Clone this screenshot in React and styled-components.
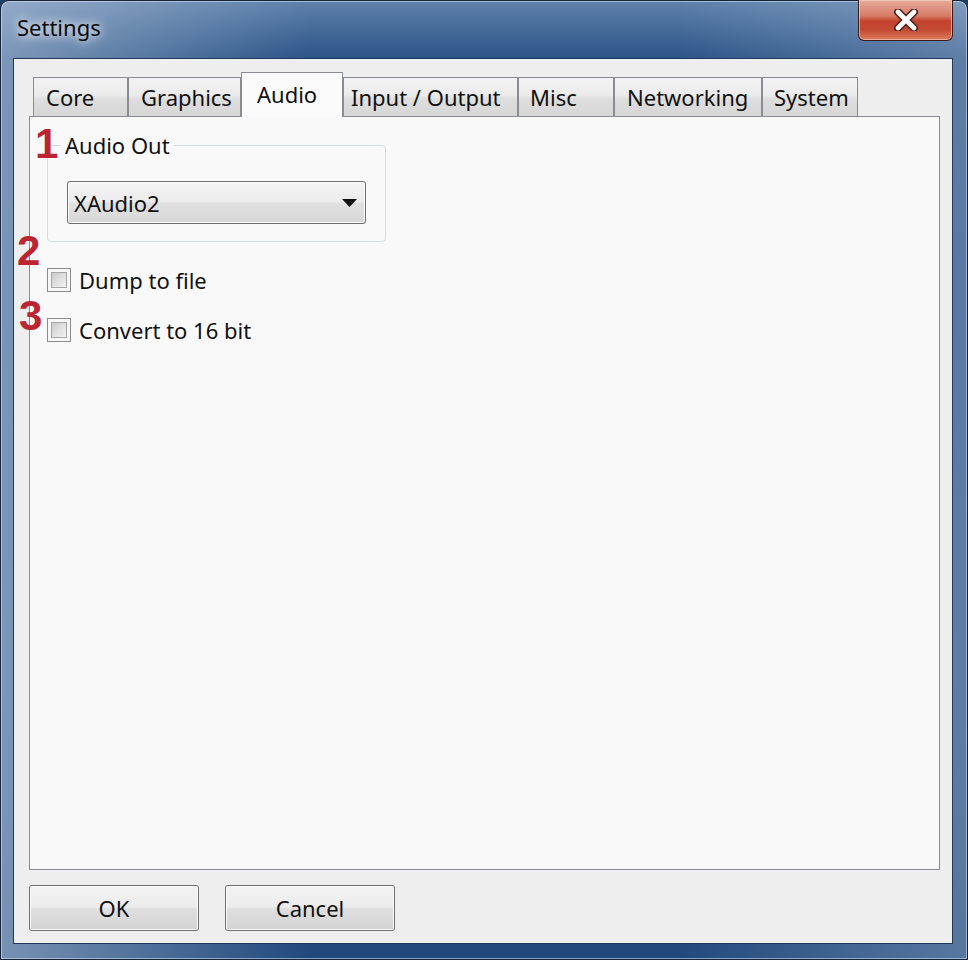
import React from 'react'
import styled, { createGlobalStyle } from 'styled-components'

const GlobalStyle = createGlobalStyle`
  html, body {
    margin: 0;
    padding: 0;
    background: #1f3f66;
  }

  body {
    font-family: 'Noto Sans', 'Open Sans', sans-serif;
    font-size: 22px;
    color: #111;
  }
`

const Window = styled.div`
  box-sizing: border-box;
  width: 968px;
  height: 960px;
  display: flex;
  flex-direction: column;
  padding: 0 14px 15px 12px;
  border: 1px solid #17253a;
  border-radius: 9px 9px 0 0;
  background:
    linear-gradient(90deg, rgba(190, 205, 225, 0.55) 0%, rgba(190, 205, 225, 0) 32%, rgba(190, 205, 225, 0) 70%, rgba(190, 205, 225, 0.35) 100%),
    linear-gradient(180deg, #5f81ab 0%, #2b5487 6%, #234e83 30%, #2a5689 70%, #21497c 100%);
  box-shadow: inset 0 0 0 1px rgba(220, 230, 245, 0.55);
`

const TitleBar = styled.div`
  height: 57px;
  display: flex;
  justify-content: space-between;
  align-items: flex-start;
`

const Title = styled.div`
  padding: 11px 0 0 4px;
  line-height: 30px;
  color: #0c0c0c;
  text-shadow: 0 0 8px rgba(255, 255, 255, 0.9), 0 0 14px rgba(255, 255, 255, 0.7);
`

const CloseButton = styled.div`
  box-sizing: border-box;
  width: 95px;
  height: 41px;
  margin-top: -1px;
  display: flex;
  align-items: center;
  justify-content: center;
  border: 1px solid #3a1d1a;
  border-top: none;
  border-radius: 0 0 6px 6px;
  background: linear-gradient(180deg, #e6ab9c 0%, #d77b66 40%, #c2432e 52%, #c44a33 75%, #dc7c5f 100%);
  box-shadow: inset 0 0 0 1px rgba(255, 220, 210, 0.55);
`

const Client = styled.div`
  flex: 1;
  display: flex;
  flex-direction: column;
  padding: 13px 12px 12px 15px;
  border: 1px solid #23395a;
  background: #eeeeee;
`

const TabStrip = styled.div`
  position: relative;
  z-index: 1;
  display: flex;
  align-items: flex-end;
  height: 45px;
  padding-left: 4px;
`

const Tab = styled.div`
  box-sizing: border-box;
  width: ${({ width }) => width}px;
  height: ${({ selected }) => (selected ? 45 : 39)}px;
  margin-bottom: ${({ selected }) => (selected ? 0 : 1)}px;
  padding-left: ${({ inset }) => inset}px;
  display: flex;
  align-items: center;
  white-space: nowrap;
  border: 1px solid #898c95;
  border-bottom: none;
  background: ${({ selected }) =>
    selected
      ? '#fafafa'
      : 'linear-gradient(180deg, #f3f3f3 0%, #ebebeb 45%, #dedede 55%, #d6d6d6 100%)'};
  padding-bottom: ${({ selected }) => (selected ? 3 : 0)}px;
`

const Pane = styled.div`
  position: relative;
  flex: 1;
  margin-top: -1px;
  padding: 13px 17px;
  border: 1px solid #898c95;
  background: #f9f9f9;
`

const Group = styled.fieldset`
  box-sizing: border-box;
  width: 339px;
  margin: 0;
  padding: 0 19px 17px 19px;
  border: 1px solid #d3dce3;
  border-radius: 4px;
`

const Legend = styled.legend`
  margin-left: -6px;
  padding: 0 4px;
  line-height: 30px;
`

const Combo = styled.div`
  box-sizing: border-box;
  height: 43px;
  margin-top: 21px;
  display: flex;
  align-items: center;
  justify-content: space-between;
  padding: 0 8px 0 6px;
  border: 1px solid #6f6f6f;
  border-radius: 3px;
  background: linear-gradient(180deg, #f3f3f3 0%, #ececec 48%, #e0e0e0 52%, #d8d8d8 100%);
  box-shadow: inset 0 0 0 1px #fbfbfb;
`

const CheckRow = styled.label`
  display: flex;
  align-items: center;
  gap: 8px;
  height: 30px;
  margin-top: ${({ gap }) => gap}px;
`

const Box = styled.span`
  box-sizing: border-box;
  width: 24px;
  height: 24px;
  padding: 3px;
  border: 1px solid #8c8c8c;
  background: #f7f7f7;

  &::after {
    content: '';
    display: block;
    box-sizing: border-box;
    width: 16px;
    height: 16px;
    border: 1px solid #a6a6a6;
    background: linear-gradient(135deg, #c9c9c9 0%, #e2e2e2 55%, #f2f2f2 100%);
  }
`

const Marker = styled.span`
  position: absolute;
  top: ${({ top }) => top}px;
  left: ${({ left }) => left}px;
  font-family: 'Liberation Sans', Arial, sans-serif;
  font-weight: 700;
  font-size: 42px;
  line-height: 42px;
  color: #bb2430;
`

const ButtonRow = styled.div`
  display: flex;
  gap: 26px;
  margin-top: 15px;
`

const Button = styled.div`
  box-sizing: border-box;
  width: 170px;
  height: 46px;
  display: flex;
  align-items: center;
  justify-content: center;
  border: 1px solid #6f6f6f;
  border-radius: 3px;
  background: linear-gradient(180deg, #f3f3f3 0%, #ececec 48%, #dfdfdf 52%, #d3d3d3 100%);
  box-shadow: inset 0 0 0 1px #fbfbfb;
`

const tabs = [
  { label: 'Core', width: 95, inset: 12 },
  { label: 'Graphics', width: 113, inset: 12 },
  { label: 'Audio', width: 102, inset: 15, selected: true },
  { label: 'Input / Output', width: 175, inset: 7 },
  { label: 'Misc', width: 96, inset: 11 },
  { label: 'Networking', width: 148, inset: 12 },
  { label: 'System', width: 96, inset: 11 }
]

function CloseGlyph () {
  return (
    <svg width='26' height='22' viewBox='0 0 26 22'>
      <path d='M5 3 L21 19 M21 3 L5 19' stroke='#4a2620' strokeWidth='8' strokeLinecap='round' />
      <path d='M5 3 L21 19 M21 3 L5 19' stroke='#fff' strokeWidth='4.6' strokeLinecap='round' />
    </svg>
  )
}

function Arrow () {
  return (
    <svg width='15' height='8' viewBox='0 0 15 8'>
      <path d='M0 0 H15 L7.5 8 Z' fill='#111' />
    </svg>
  )
}

export default function App () {
  return (
    <>
      <GlobalStyle />
      <Window>
        <TitleBar>
          <Title>Settings</Title>
          <CloseButton>
            <CloseGlyph />
          </CloseButton>
        </TitleBar>

        <Client>
          <TabStrip>
            {tabs.map(t => (
              <Tab key={t.label} width={t.width} inset={t.inset} selected={t.selected}>
                {t.label}
              </Tab>
            ))}
          </TabStrip>

          <Pane>
            <Group>
              <Legend>Audio Out</Legend>
              <Combo>
                <span>XAudio2</span>
                <Arrow />
              </Combo>
            </Group>

            <CheckRow gap={23}>
              <Box />
              Dump to file
            </CheckRow>
            <CheckRow gap={20}>
              <Box />
              Convert to 16 bit
            </CheckRow>

            <Marker top={6} left={5}>1</Marker>
            <Marker top={113} left={-13}>2</Marker>
            <Marker top={178} left={-11}>3</Marker>
          </Pane>

          <ButtonRow>
            <Button>OK</Button>
            <Button>Cancel</Button>
          </ButtonRow>
        </Client>
      </Window>
    </>
  )
}
